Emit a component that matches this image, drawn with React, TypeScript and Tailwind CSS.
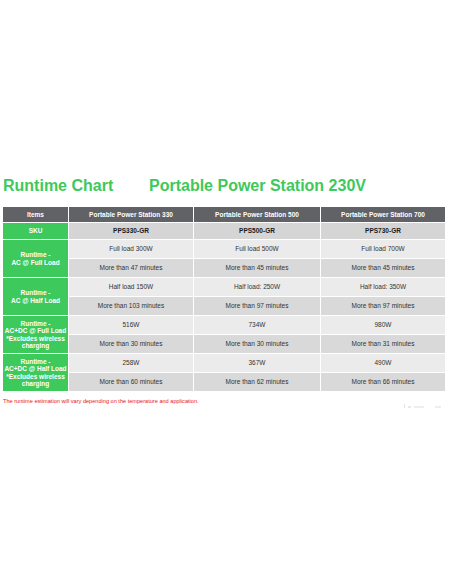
const cols = [
  { name: "Portable Power Station 330", sku: "PPS330-GR" },
  { name: "Portable Power Station 500", sku: "PPS500-GR" },
  { name: "Portable Power Station 700", sku: "PPS730-GR" },
];

const groups = [
  {
    label: ["Runtime -", "AC @ Full Load"],
    rows: [
      ["Full load 300W", "Full load 500W", "Full load 700W"],
      ["More than 47 minutes", "More than 45 minutes", "More than 45 minutes"],
    ],
  },
  {
    label: ["Runtime -", "AC @ Half Load"],
    rows: [
      ["Half load 150W", "Half load: 250W", "Half load: 350W"],
      ["More than 103 minutes", "More than 97 minutes", "More than 97 minutes"],
    ],
  },
  {
    label: ["Runtime -", "AC+DC @ Full Load", "*Excludes wireless", "charging"],
    rows: [
      ["516W", "734W", "980W"],
      ["More than 30 minutes", "More than 30 minutes", "More than 31 minutes"],
    ],
  },
  {
    label: ["Runtime -", "AC+DC @ Half Load", "*Excludes wireless", "charging"],
    rows: [
      ["258W", "367W", "490W"],
      ["More than 60 minutes", "More than 62 minutes", "More than 66 minutes"],
    ],
  },
];

export default function App() {
  return (
    <div className="w-[452px] h-[584px] bg-white pt-[176px] pl-[3px] font-['Liberation_Sans',Arial,sans-serif]">
      <div className="flex items-center text-[16px] font-bold text-[#3dc95b] leading-[20px]">
        <span className="w-[146px]">Runtime Chart</span>
        <span>Portable Power Station 230V</span>
      </div>

      <div className="mt-[11px] w-fit grid grid-cols-[65px_124px_126px_124px] gap-px bg-white text-[6.5px] leading-[7.5px] text-center">
        <div className="h-[15px] bg-[#616266] text-white font-bold flex items-center justify-center">Items</div>
        {cols.map((c) => (
          <div key={c.name} className="h-[15px] bg-[#616266] text-white font-bold flex items-center justify-center">
            {c.name}
          </div>
        ))}

        <div className="h-[16px] bg-[#3dc95b] text-white font-bold flex items-center justify-center">SKU</div>
        {cols.map((c) => (
          <div key={c.sku} className="h-[16px] bg-[#d5d5d5] text-[#1a1a1a] font-bold flex items-center justify-center">
            {c.sku}
          </div>
        ))}

        {groups.map((g, gi) => (
          <Group key={gi} label={g.label} rows={g.rows} />
        ))}
      </div>

      <div className="mt-[6px] text-[5.6px] leading-[8px] text-[#e8141b]">
        The runtime estimation will vary depending on the temperature and application.
      </div>
      <div className="flex justify-end w-[438px] gap-[3px] mt-[-1px] opacity-60">
        <span className="w-[1px] h-[4px] bg-[#cfcfcf]" />
        <span className="w-[3px] h-[2px] mt-[2px] bg-[#dcdcdc]" />
        <span className="w-[10px] h-[2px] mt-[2px] bg-[#e4e4e4]" />
        <span className="w-[6px] h-[2px] mt-[2px] bg-[#e4e4e4] ml-[8px]" />
      </div>
    </div>
  );
}

function Group({ label, rows }: { label: string[]; rows: string[][] }) {
  return (
    <>
      <div className="row-span-2 bg-[#3dc95b] text-white font-bold flex flex-col items-center justify-center leading-[7.3px]">
        {label.map((l) => (
          <span key={l}>{l}</span>
        ))}
      </div>
      {rows[0].map((t, i) => (
        <div key={"a" + i} className="h-[18px] bg-[#ebebeb] text-[#333] flex items-center justify-center">
          {t}
        </div>
      ))}
      {rows[1].map((t, i) => (
        <div key={"b" + i} className="h-[18px] bg-[#d9d9d9] text-[#333] flex items-center justify-center">
          {t}
        </div>
      ))}
    </>
  );
}
